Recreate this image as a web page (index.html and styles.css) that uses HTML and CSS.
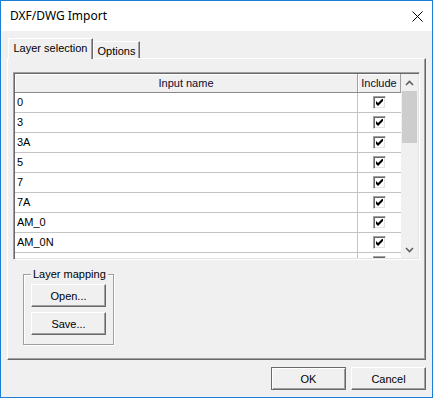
FILE: index.html
```html
<!DOCTYPE html>
<html>
<head>
<meta charset="utf-8">
<link rel="stylesheet" href="styles.css">
</head>
<body>
<div class="window">
  <div class="titlebar">
    <span class="title">DXF/DWG Import</span>
    <svg class="close" width="11" height="11" viewBox="0 0 11 11"><path d="M0.5 0.5 L10.5 10.5 M10.5 0.5 L0.5 10.5" stroke="#000" stroke-width="1" fill="none"/></svg>
  </div>
  <div class="client">
    <div class="tabs">
      <div class="tab active">Layer selection</div>
      <div class="tab">Options</div>
    </div>
    <div class="panel">
      <div class="listview">
        <div class="grid">
          <div class="hrow">
            <div class="hcell name">Input name</div>
            <div class="hcell inc">Include</div>
          </div>
          <div class="row"><div class="cell name">0</div><div class="cell inc"><span class="cb"><svg width="7" height="7" viewBox="0 0 7 7"><path d="M0 2 L2 4 L6 0 L7 0 L7 2 L2 7 L0 5 Z" fill="#000"/></svg></span></div></div>
          <div class="row"><div class="cell name">3</div><div class="cell inc"><span class="cb"><svg width="7" height="7" viewBox="0 0 7 7"><path d="M0 2 L2 4 L6 0 L7 0 L7 2 L2 7 L0 5 Z" fill="#000"/></svg></span></div></div>
          <div class="row"><div class="cell name">3A</div><div class="cell inc"><span class="cb"><svg width="7" height="7" viewBox="0 0 7 7"><path d="M0 2 L2 4 L6 0 L7 0 L7 2 L2 7 L0 5 Z" fill="#000"/></svg></span></div></div>
          <div class="row"><div class="cell name">5</div><div class="cell inc"><span class="cb"><svg width="7" height="7" viewBox="0 0 7 7"><path d="M0 2 L2 4 L6 0 L7 0 L7 2 L2 7 L0 5 Z" fill="#000"/></svg></span></div></div>
          <div class="row"><div class="cell name">7</div><div class="cell inc"><span class="cb"><svg width="7" height="7" viewBox="0 0 7 7"><path d="M0 2 L2 4 L6 0 L7 0 L7 2 L2 7 L0 5 Z" fill="#000"/></svg></span></div></div>
          <div class="row"><div class="cell name">7A</div><div class="cell inc"><span class="cb"><svg width="7" height="7" viewBox="0 0 7 7"><path d="M0 2 L2 4 L6 0 L7 0 L7 2 L2 7 L0 5 Z" fill="#000"/></svg></span></div></div>
          <div class="row"><div class="cell name">AM_0</div><div class="cell inc"><span class="cb"><svg width="7" height="7" viewBox="0 0 7 7"><path d="M0 2 L2 4 L6 0 L7 0 L7 2 L2 7 L0 5 Z" fill="#000"/></svg></span></div></div>
          <div class="row"><div class="cell name">AM_0N</div><div class="cell inc"><span class="cb"><svg width="7" height="7" viewBox="0 0 7 7"><path d="M0 2 L2 4 L6 0 L7 0 L7 2 L2 7 L0 5 Z" fill="#000"/></svg></span></div></div>
          <div class="row"><div class="cell name">AM_1</div><div class="cell inc"><span class="cb"><svg width="7" height="7" viewBox="0 0 7 7"><path d="M0 2 L2 4 L6 0 L7 0 L7 2 L2 7 L0 5 Z" fill="#000"/></svg></span></div></div>
        </div>
        <div class="scrollbar">
          <div class="sbtn"><svg width="9" height="6" viewBox="0 0 9 6"><path d="M1 5 L4.5 1.5 L8 5" stroke="#606060" stroke-width="1.6" fill="none"/></svg></div>
          <div class="thumb"></div>
          <div class="track"></div>
          <div class="sbtn"><svg width="9" height="6" viewBox="0 0 9 6"><path d="M1 1 L4.5 4.5 L8 1" stroke="#606060" stroke-width="1.6" fill="none"/></svg></div>
        </div>
      </div>
      <div class="group">
        <span class="legend">Layer mapping</span>
        <button class="btn">Open...</button>
        <button class="btn save">Save...</button>
      </div>
    </div>
    <div class="footer">
      <button class="btn default">OK</button>
      <button class="btn">Cancel</button>
    </div>
  </div>
</div>
</body>
</html>
```
FILE: styles.css
```css
html, body {
  margin: 0;
  padding: 0;
  background: #fff;
}
.window {
  width: 433px;
  height: 398px;
  box-sizing: border-box;
  border: 1px solid #1a7fd4;
  display: flex;
  flex-direction: column;
  font-family: "Liberation Sans", Arial, sans-serif;
  font-size: 11px;
  color: #000;
}
.titlebar {
  height: 30px;
  flex: none;
  background: #fff;
  display: flex;
  align-items: center;
  padding-left: 9px;
  padding-right: 9px;
}
.title {
  font-family: "Noto Sans", "Open Sans", sans-serif;
  font-size: 12px;
  flex: 1;
  margin-top: -1px;
}
.close {
  display: block;
  margin-top: 1px;
}
.client {
  flex: 1;
  background: #f0f0f0;
  padding: 7px 6px 0 6px;
  display: flex;
  flex-direction: column;
}
.tabs {
  display: flex;
  align-items: flex-end;
  height: 20px;
  padding-left: 1px;
}
.tab {
  box-sizing: border-box;
  height: 17px;
  width: 47px;
  border-top: 1px solid #fff;
  border-left: 1px solid #fff;
  border-right: 1px solid #696969;
  box-shadow: inset -1px 0 #a0a0a0;
  text-align: center;
  line-height: 17px;
  padding-top: 1px;
  background: #f0f0f0;
}
.tab.active {
  width: 85px;
  height: 21px;
  margin-bottom: -1px;
  line-height: 19px;
  padding-top: 0;
  position: relative;
  z-index: 1;
}
.panel {
  width: 419px;
  height: 302px;
  box-sizing: border-box;
  border-top: 1px solid #fff;
  border-left: 1px solid #fff;
  border-right: 1px solid #696969;
  border-bottom: 1px solid #696969;
  box-shadow: inset -1px -1px #a0a0a0;
  display: flex;
  flex-direction: column;
  align-items: flex-start;
}
.listview {
  margin: 13px 0 0 5px;
  width: 407px;
  height: 188px;
  box-sizing: border-box;
  border-top: 1px solid #a0a0a0;
  border-left: 1px solid #a0a0a0;
  border-right: 1px solid #fff;
  border-bottom: 1px solid #fff;
  box-shadow: inset 1px 1px #696969, inset -1px -1px #e3e3e3;
  padding: 1px;
  display: flex;
  overflow: hidden;
}
.grid {
  width: 386px;
  background: #fff;
  overflow: hidden;
  flex: none;
}
.hrow {
  display: flex;
  height: 19px;
  box-sizing: border-box;
  border-bottom: 1px solid #8a8a8a;
  background: #f0f0f0;
}
.hcell {
  box-sizing: border-box;
  height: 18px;
  line-height: 18px;
  text-align: center;
  border-right: 1px solid #a0a0a0;
  box-shadow: inset 1px 1px #fff;
  color: #0a0a30;
}
.name {
  width: 343px;
}
.inc {
  width: 43px;
}
.row {
  display: flex;
  height: 20px;
  box-sizing: border-box;
  border-bottom: 1px solid #c4c4c4;
}
.cell {
  box-sizing: border-box;
  height: 19px;
  line-height: 19px;
}
.cell.name {
  border-right: 1px solid #c4c4c4;
  padding-left: 2px;
}
.cell.inc {
  display: flex;
  align-items: center;
  justify-content: center;
  padding-right: 1px;
}
.cb {
  width: 13px;
  height: 13px;
  box-sizing: border-box;
  background: #fff;
  border-top: 1px solid #a0a0a0;
  border-left: 1px solid #a0a0a0;
  border-right: 1px solid #fff;
  border-bottom: 1px solid #fff;
  box-shadow: inset 1px 1px #696969, inset -1px -1px #e3e3e3;
  display: flex;
  align-items: center;
  justify-content: center;
}
.cb svg {
  display: block;
}
.scrollbar {
  width: 17px;
  flex: none;
  background: #f0f0f0;
  display: flex;
  flex-direction: column;
}
.sbtn {
  height: 17px;
  flex: none;
  display: flex;
  align-items: center;
  justify-content: center;
}
.sbtn svg {
  display: block;
}
.thumb {
  height: 52px;
  margin: 0 1px;
  background: #cdcdcd;
  flex: none;
}
.track {
  flex: 1;
}
.group {
  margin: 14px 0 0 15px;
  width: 91px;
  height: 71px;
  box-sizing: border-box;
  border: 1px solid #a0a0a0;
  box-shadow: inset 1px 1px #fff, 1px 1px #fff;
  display: flex;
  flex-direction: column;
  align-items: flex-start;
  padding-left: 7px;
}
.legend {
  margin: -7px 0 0 0;
  padding: 0 2px;
  background: #f0f0f0;
  line-height: 13px;
  height: 13px;
}
.btn {
  font-family: "Liberation Sans", Arial, sans-serif;
  font-size: 11px;
  color: #000;
  width: 75px;
  height: 23px;
  box-sizing: border-box;
  background: #f0f0f0;
  border-top: 1px solid #fff;
  border-left: 1px solid #fff;
  border-right: 1px solid #696969;
  border-bottom: 1px solid #696969;
  box-shadow: inset -1px -1px #a0a0a0;
  padding: 0;
  margin: 3px 0 0 0;
  flex: none;
}
.btn.save {
  margin-top: 5px;
}
.footer {
  display: flex;
  justify-content: flex-end;
  gap: 5px;
  padding-top: 7px;
}
.footer .btn {
  margin: 0;
}
.btn.default {
  border: 1px solid #696969;
  box-shadow: inset 1px 1px #fff, inset -1px -1px #a0a0a0;
}
```
